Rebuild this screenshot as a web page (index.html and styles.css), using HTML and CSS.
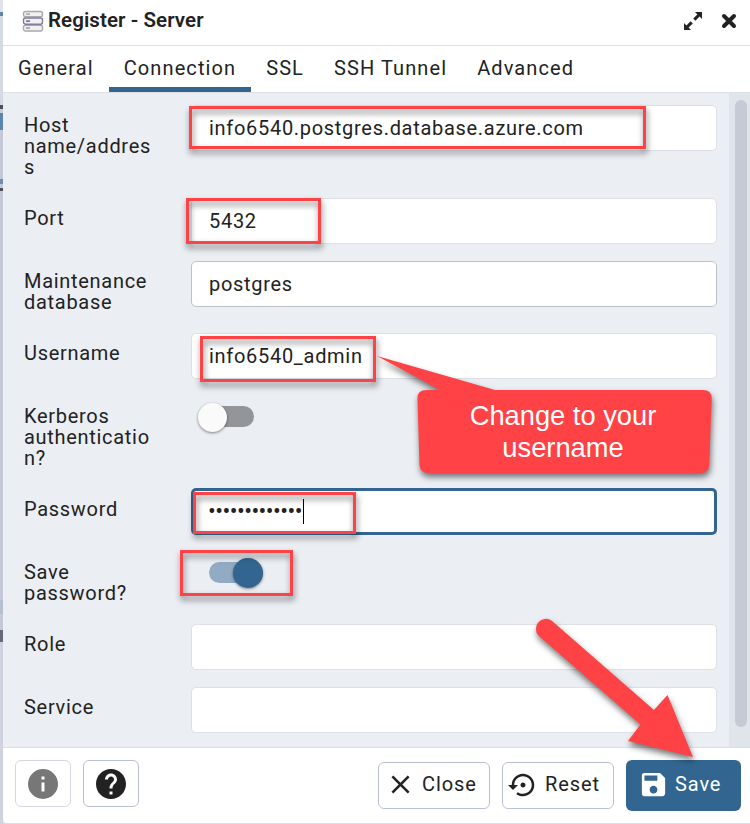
FILE: index.html
```html
<!DOCTYPE html>
<html lang="en">
<head>
<meta charset="utf-8">
<title>Register - Server</title>
<link rel="stylesheet" href="styles.css">
</head>
<body>
<div class="backdrop"></div>
<main class="dialog">
  <header class="titlebar">
    <svg class="server-icon" width="22" height="22" viewBox="0 0 22 22" fill="#f0f0f2" stroke-width="1.4">
      <rect x="1.500" y="1.500" width="19" height="5.300" rx="2" stroke="#a9a9a9"/>
      <rect x="1.500" y="15.300" width="19" height="5.700" rx="2" stroke="#a9a9a9"/>
      <rect x="1.500" y="8" width="19" height="6.200" rx="2" stroke="#8378a0"/>
      <path d="M4 4.100h4M4 18h4" stroke="#999"/><path d="M4 11.100h4" stroke="#67598d"/>
    </svg>
    <h1>Register - Server</h1>
    <svg class="expand-icon" width="20" height="20" viewBox="0 0 20 20" fill="#222">
      <path d="M12 1h7v7l-2.400-2.400-4.200 4.200-2.200-2.200 4.200-4.200zM1 12v7h7l-2.400-2.400 4.200-4.200-2.200-2.200-4.200 4.200z"/>
    </svg>
    <svg class="close-icon" width="16" height="16" viewBox="0 0 16 16" fill="none" stroke="#222" stroke-width="4" stroke-linecap="round"><path d="M3 3l10 10M13 3L3 13"/></svg>
  </header>
  <nav class="tabs">
    <span class="tab">General</span><span class="tab active">Connection</span><span class="tab">SSL</span><span class="tab">SSH Tunnel</span><span class="tab">Advanced</span>
  </nav>
  <section class="content">
    <div class="form">
      <div class="row"><label>Host name/address</label><div class="field">info6540.postgres.database.azure.com</div></div>
      <div class="row"><label>Port</label><div class="field">5432</div></div>
      <div class="row"><label>Maintenance database</label><div class="field outlined">postgres</div></div>
      <div class="row"><label>Username</label><div class="field">info6540_admin</div></div>
      <div class="row"><label>Kerberos authentication?</label><div class="switch"><i></i></div></div>
      <div class="row"><label>Password</label><div class="field focused"><span class="dots">•••••••••••••</span><i class="caret"></i></div></div>
      <div class="row"><label>Save password?</label><div class="switch on"><i></i></div></div>
      <div class="row"><label>Role</label><div class="field"></div></div>
      <div class="row"><label>Service</label><div class="field"></div></div>
    </div>
    <div class="scroll"><div class="thumb"></div></div>
  </section>
  <footer class="actions">
    <button class="icon-button muted"><svg width="36" height="36" viewBox="0 0 24 24" fill="#777"><path d="M12 2a10 10 0 100 20 10 10 0 000-20zm1 15h-2v-6h2zm0-8h-2V7h2z"/></svg></button>
    <button class="icon-button"><svg width="36" height="36" viewBox="0 0 24 24" fill="#222"><path d="M12 2C6.480 2 2 6.480 2 12s4.480 10 10 10 10-4.480 10-10S17.520 2 12 2zm1 17h-2v-2h2v2zm2.070-7.750l-.9.920C13.450 12.900 13 13.500 13 15h-2v-.5c0-1.100.45-2.100 1.170-2.830l1.240-1.260c.37-.36.59-.86.59-1.410 0-1.100-.9-2-2-2s-2 .9-2 2H8c0-2.210 1.790-4 4-4s4 1.790 4 4c0 .88-.36 1.680-.93 2.250z"/></svg></button>
    <span class="spacer"></span>
    <button class="button"><svg width="31" height="31" viewBox="0 0 24 24" fill="#222"><path d="M19 6.410L17.590 5 12 10.590 6.410 5 5 6.410 10.590 12 5 17.590 6.410 19 12 13.410 17.590 19 19 17.590 13.410 12z"/></svg>Close</button>
    <button class="button reset"><svg width="30" height="30" viewBox="0 0 24 24" fill="#222"><path d="M14 12c0-1.100-.9-2-2-2s-2 .9-2 2 .9 2 2 2 2-.9 2-2zm-2-9c-4.970 0-9 4.030-9 9H0l4 4 4-4H5c0-3.870 3.130-7 7-7s7 3.130 7 7-3.130 7-7 7c-1.510 0-2.910-.49-4.060-1.300l-1.420 1.440C8.040 20.300 9.940 21 12 21c4.970 0 9-4.030 9-9s-4.030-9-9-9z"/></svg>Reset</button>
    <button class="button primary"><svg width="31" height="31" viewBox="0 0 24 24" fill="#fff"><path d="M17 3H5a2 2 0 00-2 2v14a2 2 0 002 2h14c1.100 0 2-.9 2-2V7zm-5 16c-1.660 0-3-1.340-3-3s1.340-3 3-3 3 1.340 3 3-1.340 3-3 3zm3-10H5V5h10z"/></svg>Save</button>
  </footer>
</main>
<div class="annotations">
  <svg width="750" height="824" viewBox="0 0 750 824">
    <g class="marks" fill="none" stroke="#fe4245" stroke-width="3">
      <path d="M190.500 107.500h454v40h-454z"/>
      <path d="M187.500 199.500h132v43h-132z"/>
      <path d="M201.500 337.500h173v43h-173z"/>
      <path d="M194.500 493.500h160v39h-160z"/>
      <path d="M181.500 551.500h110v43h-110z"/>
    </g>
    <g class="marks" fill="#fe4245">
      <path d="M377 356L495 390H703q9 0 8.700 9l-2.500 66q-.5 8-9 8H429q-9 0-9.500-8l-2-66q-.5-9 9-9H440z"/>
      <path d="M551.500 620.500L654 710l13.500-15L693 757 628 741l12.500-16.500L538.500 635.500A10 10 0 01551.500 620.500z"/>
    </g>
  </svg>
  <p class="callout">Change to your<br>username</p>
</div>
</body>
</html>
```
FILE: styles.css
```css
* { box-sizing: border-box; }
body { margin: 0; width: 750px; height: 824px; overflow: hidden; display: flex; position: relative; background: #dcdee4; color: #222; font: 20px/21px Roboto, sans-serif; letter-spacing: .7px; }
.backdrop { width: 3px; flex: none; background: linear-gradient(#dfe3ec 0 12px, #5e83aa 12px 16px, #d5d9e3 16px 105px, #4b4e5c 105px 109px, #c9cdda 109px 113px, #5985af 113px 130px, #c5c8d8 130px 179px, #6e8daf 179px 184px, #c5c8d8 184px 188px, #4b4e5c 188px 191px, #c5c8d8 191px 600px, #b5c0d3 600px 614px, #c5c8d8 614px 630px, #666978 630px 642px, #d0d3df 642px); }
.dialog { width: 747px; height: 823px; display: flex; flex-direction: column; background: #fff; border-radius: 0 0 0 4px; }
.titlebar { height: 46px; border-bottom: 1px solid #dcdfe3; display: flex; align-items: center; padding: 0 13px 4px 19px; flex: none; }
.titlebar h1 { font-size: 20.500px; font-weight: 600; letter-spacing: .08px; margin: 0 auto 0 4px; }
.expand-icon { margin-right: 18px; }
.tabs { height: 47px; flex: none; display: flex; border-bottom: 1px solid #dcdfe3; }
.tab { padding: 12px 15px 0; white-space: nowrap; letter-spacing: 1.100px; }
.tab.active { border-bottom: 5px solid #326690; }
.content { height: 655px; flex: none; display: flex; background: #ebeef3; border-bottom: 1px solid #dadee3; }
.form { width: 714px; padding-top: 12px; }
.scroll { margin-left: auto; width: 21px; background: #e0e4eb; padding: 7px 3px 0 6px; }
.thumb { width: 12px; height: 627px; border-radius: 6px; background: #c5cbd5; }
.row { display: flex; align-items: flex-start; min-height: 63px; }
label { width: 130px; margin: 0 16px 0 21px; padding: 10px 0 20px; overflow-wrap: anywhere; flex: none; letter-spacing: .7px; }
.row .field { margin-left: 21px; width: 526px; height: 46px; flex: none; background: #fff; border: 1px solid #dde0e6; border-radius: 5px; padding-left: 17px; display: flex; align-items: center; }
.field.outlined { border-color: #bdc1c7; }
.row .field.focused { border: 3px solid #326690; padding-left: 14px; margin-top: -1px; height: 47px; }
.dots { font-size: 23px; letter-spacing: -.53px; }
.caret { width: 1px; height: 25px; background: #000; margin: 0 0 1px 1px; }
.switch { margin: 10px 0 0 29px; width: 55px; height: 21px; border-radius: 11px; background: #939598; }
.switch i { display: block; position: relative; width: 29px; height: 29px; top: -3px; left: -1px; border-radius: 50%; background: #fafafa; box-shadow: 0 1px 3px #0007; }
.switch.on { margin-left: 39px; background: #91abc5; width: 54px; }
.switch.on i { top: -4px; left: 24px; width: 30px; height: 30px; background: #326690; }
.actions { flex: 1; display: flex; align-items: flex-start; padding: 12px 9px 0 12px; gap: 12px; }
.spacer { flex: 1; }
button { font: inherit; letter-spacing: .9px; color: inherit; height: 47px; background: #fff; border: 1px solid #bac0cf; border-radius: 6px; display: flex; align-items: center; justify-content: center; padding: 0; }
.icon-button { width: 56px; }
.icon-button.muted { border-color: #d5d8df; }
.button { width: 112px; margin-top: 2px; gap: 6px; justify-content: flex-start; padding-left: 6px; padding-bottom: 2px; }
.button.reset { gap: 7px; padding-left: 5px; }
.button.primary { width: 115px; height: 51px; margin-top: 0; padding-left: 12px; background: #326690; border: 0; color: #fff; }
.annotations { position: absolute; inset: 0; pointer-events: none; }
.annotations svg { display: block; }
.marks path { filter: drop-shadow(1px 4px 3px #0008); }
.callout { position: absolute; left: 416px; top: 400px; width: 294px; margin: 0; text-align: center; color: #fff; font: 27.300px/32px "Liberation Sans", sans-serif; letter-spacing: 0; }
```
